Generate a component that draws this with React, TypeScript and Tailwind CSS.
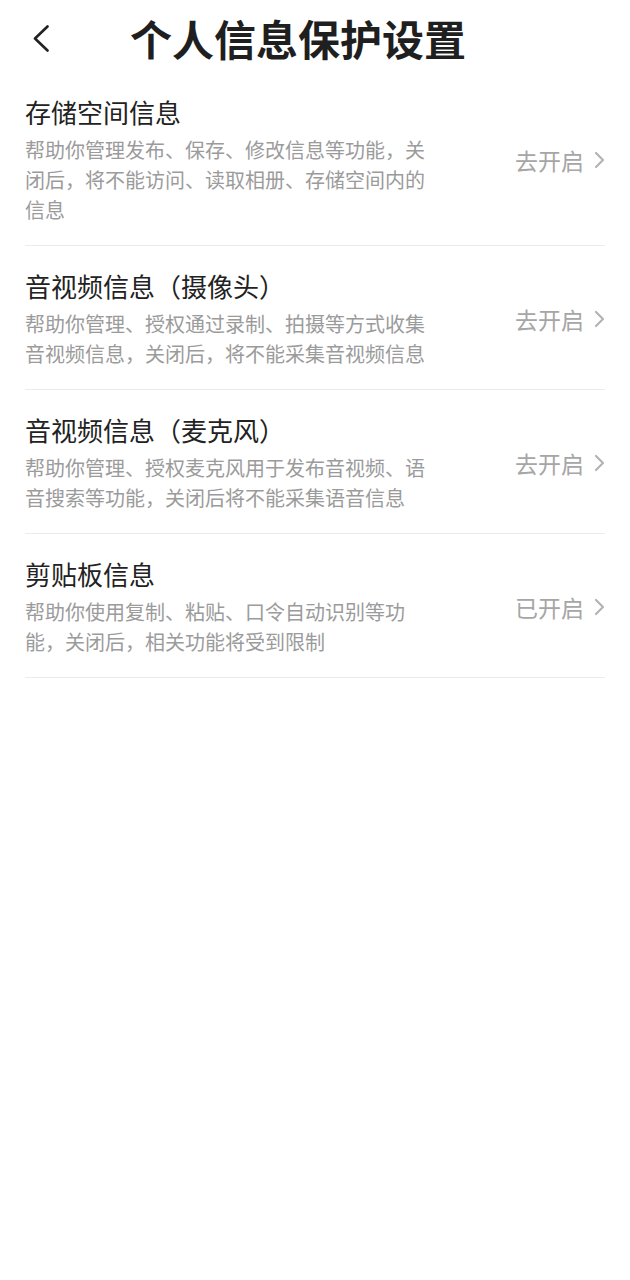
import React from "react";

const items = [
  {
    title: "存储空间信息",
    desc: "帮助你管理发布、保存、修改信息等功能，关闭后，将不能访问、读取相册、存储空间内的信息",
    status: "去开启",
  },
  {
    title: "音视频信息（摄像头）",
    desc: "帮助你管理、授权通过录制、拍摄等方式收集音视频信息，关闭后，将不能采集音视频信息",
    status: "去开启",
  },
  {
    title: "音视频信息（麦克风）",
    desc: "帮助你管理、授权麦克风用于发布音视频、语音搜索等功能，关闭后将不能采集语音信息",
    status: "去开启",
  },
  {
    title: "剪贴板信息",
    desc: "帮助你使用复制、粘贴、口令自动识别等功能，关闭后，相关功能将受到限制",
    status: "已开启",
  },
];

export default function App() {
  return (
    <div
      className="w-[630px] min-h-[1280px] bg-white"
      style={{ fontFamily: '"Noto Sans CJK SC", "Noto Sans", sans-serif' }}
    >
      <div className="h-[72px] flex items-center pt-1">
        <div className="ml-[33px] w-[16px] flex items-center">
          <svg width="16" height="27" viewBox="0 0 16 27" fill="none">
            <path d="M14.5 1.5 L2 13.5 L14.5 25.5" stroke="#222" strokeWidth="2.6" strokeLinecap="round" strokeLinejoin="round" />
          </svg>
        </div>
        <div className="ml-[81px] text-[42px] leading-[50px] font-bold text-[#1f1f1f]">
          个人信息保护设置
        </div>
      </div>
      <div className="mx-[25px]">
        {items.map((it) => (
          <div
            key={it.title}
            className="flex items-center justify-between pt-[22px] pb-[20px] border-b border-[#ececec]"
          >
            <div className="w-[404px]">
              <div className="text-[26px] leading-[36px] text-[#222]">{it.title}</div>
              <div className="mt-[5px] text-[20px] leading-[30px] text-[#9b9b9b]">{it.desc}</div>
            </div>
            <div className="flex items-center">
              <span className="text-[23px] leading-[30px] text-[#a6a6a6]">{it.status}</span>
              <svg className="ml-[10px]" width="11" height="18" viewBox="0 0 11 18" fill="none">
                <path d="M2 2 L9 9 L2 16" stroke="#b3b3b3" strokeWidth="2.2" strokeLinecap="round" strokeLinejoin="round" />
              </svg>
            </div>
          </div>
        ))}
      </div>
    </div>
  );
}
